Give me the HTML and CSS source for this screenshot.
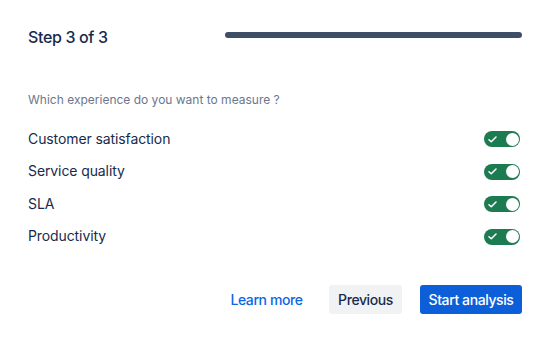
FILE: index.html
```html
<!DOCTYPE html>
<html lang="en">
<head>
<meta charset="utf-8">
<link rel="stylesheet" href="styles.css">
</head>
<body>
<div class="card">
  <div class="header">
    <h2 class="title">Step 3 of 3</h2>
    <div class="progress"></div>
  </div>
  <p class="question">Which experience do you want to measure ?</p>
  <ul class="options">
    <li class="option"><span>Customer satisfaction</span><span class="toggle"><svg class="check" viewBox="0 0 10 8" width="9" height="7"><path d="M1 4.2 L3.6 6.6 L9 1.2" fill="none" stroke="#fff" stroke-width="1.7" stroke-linecap="round" stroke-linejoin="round"/></svg><span class="knob"></span></span></li>
    <li class="option"><span>Service quality</span><span class="toggle"><svg class="check" viewBox="0 0 10 8" width="9" height="7"><path d="M1 4.2 L3.6 6.6 L9 1.2" fill="none" stroke="#fff" stroke-width="1.7" stroke-linecap="round" stroke-linejoin="round"/></svg><span class="knob"></span></span></li>
    <li class="option"><span>SLA</span><span class="toggle"><svg class="check" viewBox="0 0 10 8" width="9" height="7"><path d="M1 4.2 L3.6 6.6 L9 1.2" fill="none" stroke="#fff" stroke-width="1.7" stroke-linecap="round" stroke-linejoin="round"/></svg><span class="knob"></span></span></li>
    <li class="option"><span>Productivity</span><span class="toggle"><svg class="check" viewBox="0 0 10 8" width="9" height="7"><path d="M1 4.2 L3.6 6.6 L9 1.2" fill="none" stroke="#fff" stroke-width="1.7" stroke-linecap="round" stroke-linejoin="round"/></svg><span class="knob"></span></span></li>
  </ul>
  <div class="actions">
    <button class="btn btn-link">Learn more</button>
    <button class="btn btn-default">Previous</button>
    <button class="btn btn-primary">Start analysis</button>
  </div>
</div>
</body>
</html>
```
FILE: styles.css
```css
* { box-sizing: border-box; }
html, body { margin: 0; padding: 0; background: #fff; }
body {
  font-family: Inter, "Noto Sans", "Liberation Sans", sans-serif;
  color: #172B4D;
  width: 554px;
  height: 349px;
  overflow: hidden;
}
.card {
  padding: 25px 32px 0 28px;
}
.header {
  display: flex;
  align-items: flex-start;
  height: 24px;
}
.title {
  margin: 0;
  flex: 0 0 197px;
  font-size: 16px;
  line-height: 24px;
  font-weight: 500;
  letter-spacing: -0.35px;
  color: #172B4D;
}
.progress {
  flex: 1;
  height: 6px;
  margin-top: 7px;
  border-radius: 3px;
  background: #3F4E67;
}
.question {
  margin: 43px 0 0;
  font-size: 12px;
  line-height: 16px;
  color: #6B778C;
}
.options {
  list-style: none;
  margin: 13.75px 0 0;
  padding: 0;
}
.option {
  display: flex;
  align-items: center;
  justify-content: space-between;
  height: 32.5px;
  font-size: 14px;
  letter-spacing: -0.1px;
  color: #172B4D;
}
.toggle {
  display: flex;
  align-items: center;
  width: 36px;
  height: 16px;
  margin: 2px 2px 0 0;
  padding: 2px 1.5px 2px 2px;
  border-radius: 8px;
  background: #1D7B52;
}
.check {
  margin-left: 2px;
}
.knob {
  margin-left: auto;
  width: 13px;
  height: 13px;
  border-radius: 50%;
  background: #fff;
}
.actions {
  display: flex;
  justify-content: flex-end;
  align-items: center;
  gap: 17px;
  margin-top: 33.25px;
}
.btn {
  font-family: inherit;
  font-size: 14px;
  font-weight: 500;
  letter-spacing: -0.4px;
  height: 29px;
  border: 0;
  border-radius: 3px;
  padding: 0;
  text-align: center;
  cursor: pointer;
}
.btn-link {
  width: 91px;
  background: transparent;
  color: #0C66E4;
}
.btn-default {
  width: 73px;
  background: #F1F2F4;
  color: #172B4D;
}
.btn-primary {
  width: 102px;
  margin-left: 1px;
  background: #0C5FD8;
  color: #fff;
}
```
